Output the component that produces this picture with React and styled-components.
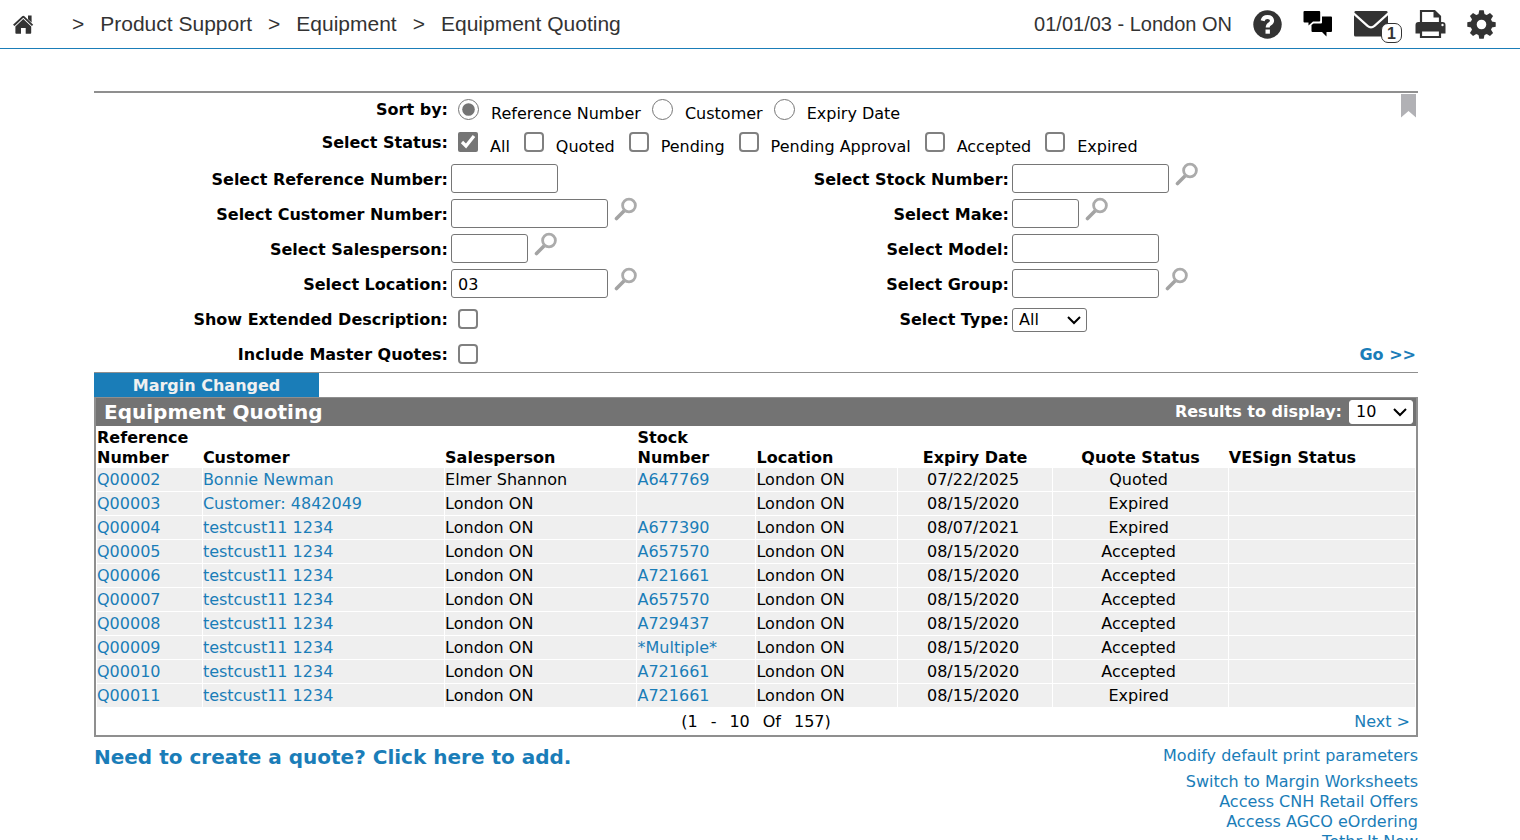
import { createGlobalStyle, styled } from "styled-components";

const quotes = [
  ["Q00002", "Bonnie Newman", "Elmer Shannon", "A647769", "07/22/2025", "Quoted"],
  ["Q00003", "Customer: 4842049", "London ON", "", "08/15/2020", "Expired"],
  ["Q00004", "testcust11 1234", "London ON", "A677390", "08/07/2021", "Expired"],
  ["Q00005", "testcust11 1234", "London ON", "A657570", "08/15/2020", "Accepted"],
  ["Q00006", "testcust11 1234", "London ON", "A721661", "08/15/2020", "Accepted"],
  ["Q00007", "testcust11 1234", "London ON", "A657570", "08/15/2020", "Accepted"],
  ["Q00008", "testcust11 1234", "London ON", "A729437", "08/15/2020", "Accepted"],
  ["Q00009", "testcust11 1234", "London ON", "*Multiple*", "08/15/2020", "Accepted"],
  ["Q00010", "testcust11 1234", "London ON", "A721661", "08/15/2020", "Accepted"],
  ["Q00011", "testcust11 1234", "London ON", "A721661", "08/15/2020", "Expired"],
];

const statuses = ["All", "Quoted", "Pending", "Pending Approval", "Accepted", "Expired"];
const sorts = ["Reference Number", "Customer", "Expiry Date"];

function HomeIcon() {
  return (
    <svg width="24" height="22" viewBox="0 0 24 22" fill="#333">
      <path d="M10.200 3.200q1.100-1 2.200 0l8.800 8.500-1.300 1.300-8.600-8.200L2.600 13 1 11.700z" />
      <path d="M16 2.500h3.600v7L16 6.200z" />
      <path d="m11.300 6 7.900 7.500V20q0 .8-.8.800h-4.700V15H9v5.800H4.200q-.8 0-.8-.8v-6.500z" />
    </svg>
  );
}

function HelpIcon() {
  return (
    <svg width="29" height="29" viewBox="0 0 29 29" fill="none">
      <circle cx="14.500" cy="14.500" r="14.200" fill="#333" />
      <path
        d="M9.600 10.800Q10.500 7 14.500 7t4.600 3.600q0 2-2.200 3.300-2.200 1.300-2.200 3.600"
        stroke="#fff"
        strokeWidth="4"
      />
      <path d="M12.500 19.500h4.400v4.200h-4.400z" fill="#fff" />
    </svg>
  );
}

function ChatIcon() {
  return (
    <svg width="30" height="28" viewBox="0 0 30 28" fill="#000">
      <path d="M1.500 1h14.700q1 0 1 1v8.500q0 1-1 1H10L5.500 15.500V12.500h-4q-1 0-1-1V2q0-1 1-1z" />
      <path d="M19 6.500h9q1 0 1 1V21q0 1-1 1h-4.500v4.500L19 22H9.500q-1 0-1-1v-6l2-1.500H18q1 0 1-1z" />
    </svg>
  );
}

function MailIcon() {
  return (
    <svg width="34" height="28" viewBox="0 0 34 28" fill="#333">
      <path d="M1.500 1h31q1.200 0 1.200 1.500L19.500 15.200q-2.500 2.200-5 0L.3 2.500Q.3 1 1.500 1z" />
      <path d="M0 5.200 12.800 16.700q4.200 3.400 8.400 0L34 5.200V25q0 1.500-1.500 1.500h-31Q0 26.500 0 25z" />
    </svg>
  );
}

function PrintIcon() {
  return (
    <svg width="31" height="30" viewBox="0 0 31 30">
      <path d="M6 14V2h13.500L25 7.500V14" fill="#fff" stroke="#333" strokeWidth="2.200" />
      <path d="M18.500 1v7.500H26z" fill="#333" />
      <path d="M3.500 13h24q3 0 3 3v8.500h-5v-3h-20v3h-5V16q0-3 3-3z" fill="#333" />
      <path d="M6 21.500h19V28H6z" fill="#fff" stroke="#333" strokeWidth="2.200" />
      <circle cx="27.500" cy="16" r="1.200" fill="#fff" />
    </svg>
  );
}

function GearIcon() {
  return (
    <svg width="29" height="29" viewBox="0 0 29 29">
      <circle cx="14.500" cy="14.500" r="7.800" fill="none" stroke="#333" strokeWidth="6" />
      {[0, 45, 90, 135, 180, 225, 270, 315].map((deg) => (
        <path key={deg} d="M11.200 5.500 12.300.3h4.400l1.100 5.200z" fill="#333" transform={`rotate(${deg} 14.500 14.500)`} />
      ))}
    </svg>
  );
}

function SearchIcon() {
  return (
    <svg width="24" height="24" viewBox="0 0 24 24" fill="none">
      <path d="m2.500 21.500 8-8" stroke="#a3a3a3" strokeWidth="3.600" strokeLinecap="round" />
      <circle cx="15" cy="8.500" r="6.400" fill="#fff" stroke="#ababab" strokeWidth="2.800" />
    </svg>
  );
}

function Field({ id, label, width, search, value }) {
  return (
    <>
      <Label htmlFor={id}>{label}:</Label>
      <Control>
        <TextBox id={id} $width={width} defaultValue={value} />
        {search && (
          <SearchBtn type="button" aria-label={label}>
            <SearchIcon />
          </SearchBtn>
        )}
      </Control>
    </>
  );
}

function Dropdown({ id, width, plain, children }) {
  return (
    <SelectWrap>
      <Select id={id} $width={width} $plain={plain}>
        {children}
      </Select>
      <Chevron width="14" height="10" viewBox="0 0 14 10">
        <path d="m1 2 6 6 6-6" fill="none" stroke="#000" strokeWidth="2" />
      </Chevron>
    </SelectWrap>
  );
}

function Header() {
  return (
    <TopBar>
      <Crumbs>
        <HomeLink href="#" aria-label="Home">
          <HomeIcon />
        </HomeLink>
        <span>&gt;</span>
        <Crumb href="#">Product Support</Crumb>
        <span>&gt;</span>
        <Crumb href="#">Equipment</Crumb>
        <span>&gt;</span>
        <Crumb href="#">Equipment Quoting</Crumb>
      </Crumbs>
      <Tools>
        <Branch>01/01/03 - London ON</Branch>
        <Tool type="button" aria-label="Help">
          <HelpIcon />
        </Tool>
        <Tool type="button" aria-label="Chat">
          <ChatIcon />
        </Tool>
        <MailTool type="button" aria-label="Messages">
          <MailIcon />
          <Badge>1</Badge>
        </MailTool>
        <Tool type="button" aria-label="Print">
          <PrintIcon />
        </Tool>
        <Tool type="button" aria-label="Settings">
          <GearIcon />
        </Tool>
      </Tools>
    </TopBar>
  );
}

function Filters() {
  return (
    <FilterBox>
      <Bookmark type="button" aria-label="Bookmark">
        <svg width="15" height="24" viewBox="0 0 15 24" fill="#b1b1b5">
          <path d="M0 0h15v23.500l-7.500-6.500L0 23.500z" />
        </svg>
      </Bookmark>
      <OptionRow>
        <Label as="span">Sort by:</Label>
        <Options $gap={11}>
          {sorts.map((name, i) => (
            <Option key={name}>
              <Radio type="radio" name="sort" defaultChecked={i === 0} />
              <OptionText>{name}</OptionText>
            </Option>
          ))}
        </Options>
      </OptionRow>
      <OptionRow>
        <Label as="span">Select Status:</Label>
        <Options $gap={14}>
          {statuses.map((name, i) => (
            <Option key={name}>
              <Check type="checkbox" defaultChecked={i === 0} />
              <OptionText>{name}</OptionText>
            </Option>
          ))}
        </Options>
      </OptionRow>
      <Fields>
        <Field id="ref" label="Select Reference Number" width={107} />
        <Field id="stock" label="Select Stock Number" width={157} search />
        <Field id="customer" label="Select Customer Number" width={157} search />
        <Field id="make" label="Select Make" width={67} search />
        <Field id="sales" label="Select Salesperson" width={77} search />
        <Field id="model" label="Select Model" width={147} />
        <Field id="location" label="Select Location" width={157} search value="03" />
        <Field id="group" label="Select Group" width={147} search />
        <Label htmlFor="extended">Show Extended Description:</Label>
        <Control>
          <Check id="extended" type="checkbox" />
        </Control>
        <Label htmlFor="type">Select Type:</Label>
        <Control>
          <Dropdown id="type" width={75}>
            <option>All</option>
          </Dropdown>
        </Control>
        <Label htmlFor="master">Include Master Quotes:</Label>
        <Control>
          <Check id="master" type="checkbox" />
        </Control>
        <GoLink href="#">Go &gt;&gt;</GoLink>
      </Fields>
    </FilterBox>
  );
}

function Results() {
  return (
    <>
      <Tab type="button">Margin Changed</Tab>
      <Panel>
        <PanelHead>
          <PanelTitle>Equipment Quoting</PanelTitle>
          <PageSize>
            <label htmlFor="size">Results to display:</label>
            <Dropdown id="size" width={64} plain>
              <option>10</option>
            </Dropdown>
          </PageSize>
        </PanelHead>
        <Table>
          <thead>
            <tr>
              <Th $width={8}>Reference Number</Th>
              <Th $width={18.4}>Customer</Th>
              <Th $width={14.6}>Salesperson</Th>
              <Th $width={9}>Stock Number</Th>
              <Th $width={10.7}>Location</Th>
              <Th $width={11.8} $center>
                Expiry Date
              </Th>
              <Th $width={13.3} $center>
                Quote Status
              </Th>
              <Th>VESign Status</Th>
            </tr>
          </thead>
          <tbody>
            {quotes.map(([ref, customer, seller, stock, expiry, status]) => (
              <tr key={ref}>
                <Td>
                  <Link href="#">{ref}</Link>
                </Td>
                <Td>
                  <Link href="#">{customer}</Link>
                </Td>
                <Td>{seller}</Td>
                <Td>{stock && <Link href="#">{stock}</Link>}</Td>
                <Td>London ON</Td>
                <Td $center>{expiry}</Td>
                <Td $center>{status}</Td>
                <Td />
              </tr>
            ))}
          </tbody>
        </Table>
        <Pager>
          <Range>
            <span>(1</span>
            <span>-</span>
            <span>10</span>
            <span>Of</span>
            <span>157)</span>
          </Range>
          <NextLink href="#">Next &gt;</NextLink>
        </Pager>
      </Panel>
    </>
  );
}

function App() {
  return (
    <>
      <GlobalStyle />
      <Header />
      <Main>
        <Filters />
        <Results />
        <Footer>
          <AddLink href="#">Need to create a quote? Click here to add.</AddLink>
          <Links>
            <PrintLink href="#">Modify default print parameters</PrintLink>
            <Link href="#">Switch to Margin Worksheets</Link>
            <Link href="#">Access CNH Retail Offers</Link>
            <Link href="#">Access AGCO eOrdering</Link>
            <Link href="#">Tethr It Now</Link>
          </Links>
        </Footer>
      </Main>
    </>
  );
}

const GlobalStyle = createGlobalStyle`
  * {
    box-sizing: border-box;
  }

  html {
    scrollbar-width: none;
  }

  body {
    margin: 0;
    background: #fff;
    color: #000;
    font-family: Verdana, "DejaVu Sans", sans-serif;
    font-size: 16px;
    line-height: 20px;
  }

  a {
    color: #1a7db8;
    text-decoration: none;
  }

  button {
    padding: 0;
    border: 0;
    background: none;
    font: inherit;
  }

  svg {
    display: block;
  }
`;

const TopBar = styled.header`
  display: flex;
  align-items: center;
  justify-content: space-between;
  height: 49px;
  padding: 0 24px 0 12px;
  border-bottom: 1px solid #1a7db8;
  color: #333;
  font-family: Arial, "Liberation Sans", sans-serif;
`;

const Crumbs = styled.nav`
  display: flex;
  align-items: center;
  gap: 16px;
  font-size: 21px;
`;

const HomeLink = styled.a`
  margin-right: 20px;
`;

const Crumb = styled.a`
  color: #333;
`;

const Tools = styled.div`
  display: flex;
  align-items: center;
  gap: 21px;
`;

const Branch = styled.span`
  font-size: 20px;
`;

const Tool = styled.button`
  position: relative;
  color: #333;
`;

const MailTool = styled(Tool)`
  margin-right: 6px;
`;

const Badge = styled.span`
  position: absolute;
  right: -14px;
  bottom: -5px;
  width: 21px;
  height: 20px;
  border: 1px solid #333;
  border-radius: 7px;
  background: #fff;
  font-size: 16px;
  font-weight: 700;
  line-height: 20px;
`;

const Main = styled.main`
  padding: 42px 102px 0 94px;
`;

const FilterBox = styled.form`
  position: relative;
  padding-top: 1px;
  border-top: 2px solid #8f8f8f;
  border-bottom: 1px solid #8f8f8f;
`;

const Bookmark = styled.button`
  position: absolute;
  top: 1px;
  right: 2px;
`;

const Label = styled.label`
  padding-top: 6px;
  font-weight: 700;
  text-align: right;
  white-space: nowrap;
`;

const OptionRow = styled.div`
  display: grid;
  grid-template-columns: 354px 1fr;
  height: 33px;
`;

const Fields = styled.div`
  display: grid;
  grid-template-columns: 354px 1fr 200px 409px;
  grid-auto-rows: 35px;
  padding-top: 2px;

  ${Label} {
    padding-top: 8px;
  }
`;

const Options = styled.div`
  display: flex;
  gap: ${({ $gap }) => $gap}px;
  padding: 5px 0 0 10px;
`;

const Option = styled.label`
  display: flex;
  gap: 12px;
`;

const OptionText = styled.span`
  padding-top: 5px;
`;

const Radio = styled.input`
  width: 21px;
  height: 21px;
  margin: 0;
  accent-color: #757575;
`;

const Check = styled.input`
  width: 20px;
  height: 20px;
  margin: 0;
  accent-color: #757575;

  &:not(:checked) {
    appearance: none;
    border: 2px solid #808080;
    border-radius: 4px;
    background: #fff;
  }
`;

const SelectWrap = styled.div`
  position: relative;
`;

const Control = styled.div`
  display: flex;
  align-items: flex-start;
  gap: 6px;
  padding-left: 3px;

  ${Check} {
    margin: 7px 0 0 7px;
  }

  ${SelectWrap} {
    margin-top: 6px;
  }
`;

const TextBox = styled.input`
  width: ${({ $width }) => $width}px;
  height: 29px;
  margin-top: 2px;
  padding: 2px 6px 0;
  border: 1px solid #767676;
  border-radius: 3px;
  font: inherit;
`;

const SearchBtn = styled.button`
  cursor: pointer;
`;

const Select = styled.select`
  display: block;
  appearance: none;
  width: ${({ $width }) => $width}px;
  height: 24px;
  padding: 0 6px;
  border: 1px solid ${({ $plain }) => ($plain ? "#fff" : "#767676")};
  border-radius: 3px;
  background: #fff;
  color: #000;
  font: inherit;
`;

const Chevron = styled.svg`
  position: absolute;
  top: 7px;
  right: 6px;
  pointer-events: none;
`;

const GoLink = styled.a`
  grid-column: 3 / 5;
  padding: 8px 2px 0 0;
  font-weight: 700;
  text-align: right;
`;

const Tab = styled.button`
  display: block;
  width: 225px;
  height: 24px;
  padding-top: 2px;
  background: #1a7db8;
  color: #f0f0f0;
  font-weight: 700;
`;

const Panel = styled.section`
  border: 2px solid #8f8f8f;
  border-top-width: 1px;
`;

const PanelHead = styled.div`
  display: flex;
  align-items: center;
  justify-content: space-between;
  height: 28px;
  padding: 0 3px 0 8px;
  background: #737373;
  color: #fff;
`;

const PanelTitle = styled.h1`
  margin: 0;
  font-size: 20px;
`;

const PageSize = styled.div`
  display: flex;
  align-items: center;
  gap: 7px;
  font-weight: 700;

  ${Select} {
    font-weight: 400;
  }
`;

const Table = styled.table`
  width: 100%;
  table-layout: fixed;
  border-spacing: 1px 0;
`;

const Th = styled.th`
  width: ${({ $width }) => ($width ? `${$width}%` : "auto")};
  padding: 2px 0 0;
  text-align: ${({ $center }) => ($center ? "center" : "left")};
  vertical-align: bottom;
`;

const Td = styled.td`
  height: 24px;
  padding: 0 ${({ $center }) => ($center ? 4 : 0)}px 0 0;
  border-bottom: 1px solid #fff;
  background: #efefef;
  background-clip: padding-box;
  text-align: ${({ $center }) => ($center ? "center" : "left")};
  white-space: nowrap;
`;

const Link = styled.a`
  color: #1a7db8;
`;

const Pager = styled.div`
  display: grid;
  grid-template-columns: 1fr auto 1fr;
  align-items: center;
  height: 27px;
`;

const Range = styled.div`
  display: flex;
  grid-column: 2;
  gap: 13px;
`;

const NextLink = styled(Link)`
  padding-right: 6px;
  text-align: right;
`;

const Footer = styled.footer`
  display: flex;
  justify-content: space-between;
`;

const AddLink = styled.a`
  padding-top: 10px;
  font-size: 20px;
  font-weight: 700;
`;

const Links = styled.div`
  display: flex;
  flex-direction: column;
  padding-top: 9px;
  text-align: right;
`;

const PrintLink = styled(Link)`
  margin-bottom: 6px;
`;

export default App;
